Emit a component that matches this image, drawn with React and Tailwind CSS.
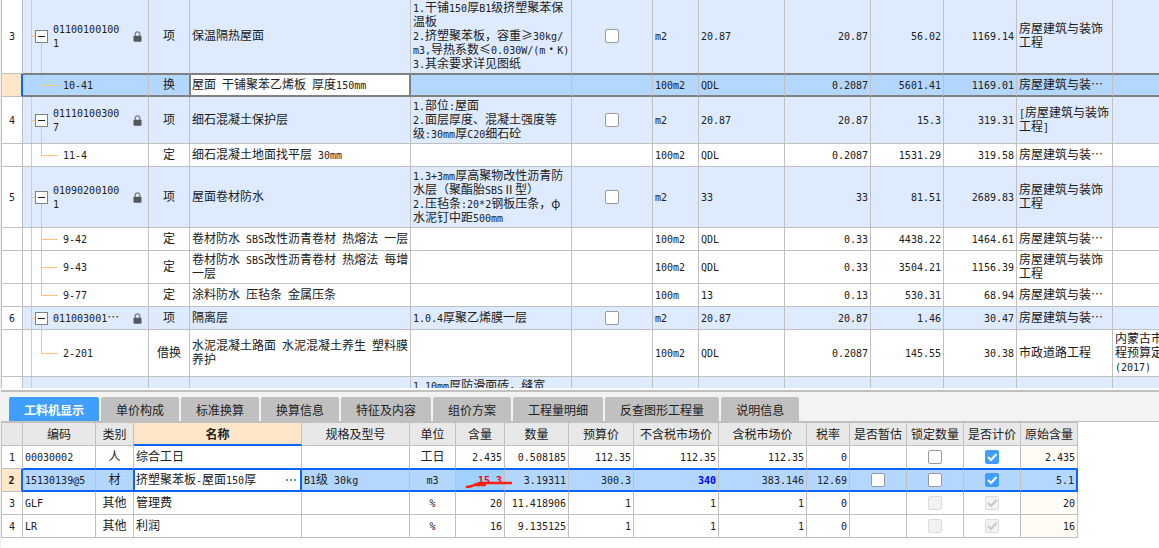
import {useState} from "react";

const quotaRows = [
    {no: "3", code: "01100100100\n1", kind: "项", name: "保温隔热屋面", feature: "1.干铺150厚B1级挤塑聚苯保\n温板\n2.挤塑聚苯板，容重≥30kg/\nm3,导热系数≤0.030W/(m·K)\n3.其余要求详见图纸", unit: "m2", expr: "20.87", qty: "20.87", price: "56.02", total: "1169.14", major: "房屋建筑与装饰\n工程"},
    {code: "10-41", kind: "换", name: "屋面 干铺聚苯乙烯板 厚度150mm", unit: "100m2", expr: "QDL", qty: "0.2087", price: "5601.41", total: "1169.01", major: "房屋建筑与装…", selected: true, last: true},
    {no: "4", code: "01110100300\n7", kind: "项", name: "细石混凝土保护层", feature: "1.部位:屋面\n2.面层厚度、混凝土强度等\n级:30mm厚C20细石砼", unit: "m2", expr: "20.87", qty: "20.87", price: "15.3", total: "319.31", major: "[房屋建筑与装饰\n工程]"},
    {code: "11-4", kind: "定", name: "细石混凝土地面找平层 30mm", unit: "100m2", expr: "QDL", qty: "0.2087", price: "1531.29", total: "319.58", major: "房屋建筑与装…", last: true},
    {no: "5", code: "01090200100\n1", kind: "项", name: "屋面卷材防水", feature: "1.3+3mm厚高聚物改性沥青防\n水层（聚酯胎SBSⅡ型）\n2.压毡条:20*2钢板压条，φ\n水泥钉中距500mm", unit: "m2", expr: "33", qty: "33", price: "81.51", total: "2689.83", major: "房屋建筑与装饰\n工程"},
    {code: "9-42", kind: "定", name: "卷材防水 SBS改性沥青卷材 热熔法 一层", unit: "100m2", expr: "QDL", qty: "0.33", price: "4438.22", total: "1464.61", major: "房屋建筑与装…"},
    {code: "9-43", kind: "定", name: "卷材防水 SBS改性沥青卷材 热熔法 每增\n一层", unit: "100m2", expr: "QDL", qty: "0.33", price: "3504.21", total: "1156.39", major: "房屋建筑与装饰\n工程"},
    {code: "9-77", kind: "定", name: "涂料防水 压毡条 金属压条", unit: "100m", expr: "13", qty: "0.13", price: "530.31", total: "68.94", major: "房屋建筑与装…", last: true},
    {no: "6", code: "011003001…", kind: "项", name: "隔离层", feature: "1.0.4厚聚乙烯膜一层", unit: "m2", expr: "20.87", qty: "20.87", price: "1.46", total: "30.47", major: "房屋建筑与装…"},
    {code: "2-201", kind: "借换", name: "水泥混凝土路面 水泥混凝土养生 塑料膜\n养护", unit: "100m2", expr: "QDL", qty: "0.2087", price: "145.55", total: "30.38", major: "市政道路工程", book: "内蒙古市\n程预算定\n(2017)", last: true},
];

const tabs = ["工料机显示", "单价构成", "标准换算", "换算信息", "特征及内容", "组价方案", "工程量明细", "反查图形工程量", "说明信息"];

const resourceHeads = ["编码", "类别", "名称", "规格及型号", "单位", "含量", "数量", "预算价", "不含税市场价", "含税市场价", "税率", "是否暂估", "锁定数量", "是否计价", "原始含量"];

const resources = [
    {no: "1", code: "00030002", kind: "人", name: "综合工日", unit: "工日", content: "2.435", qty: "0.508185", budget: "112.35", net: "112.35", gross: "112.35", tax: "0", origin: "2.435"},
    {no: "2", code: "15130139@5", kind: "材", name: "挤塑聚苯板-屋面150厚", spec: "B1级 30kg", unit: "m3", content: "15.3", qty: "3.19311", budget: "300.3", net: "340", gross: "383.146", tax: "12.69", origin: "5.1", selected: true},
    {no: "3", code: "GLF", kind: "其他", name: "管理费", unit: "%", content: "20", qty: "11.418906", budget: "1", net: "1", gross: "1", tax: "0", origin: "20", locked: true},
    {no: "4", code: "LR", kind: "其他", name: "利润", unit: "%", content: "16", qty: "9.135125", budget: "1", net: "1", gross: "1", tax: "0", origin: "16", locked: true},
];

// Half-width characters take 6px, full-width ones 12px
const Txt = ({children}) => (children || "").split(/([\x20-\x7e]+)/).map((part, i) => (
    i % 2 ? <span key={i} className="font-['DejaVu_Sans_Mono',monospace] text-[10px] leading-none">{part}</span> : part
));

const Check = ({label, checked = false, disabled = false}) => {
    const [on, setOn] = useState(checked);
    const look = disabled ? "border-[#dcdcdc] bg-[#f2f2f2]" : on ? "border-[#409eff] bg-[#409eff]" : "border-[#999999] bg-white";
    return (<span className="grid place-items-center">
        <input type="checkbox" aria-label={label} checked={on} disabled={disabled}
               onChange={() => setOn(!on)}
               className={"col-start-1 row-start-1 size-3.5 appearance-none rounded-xs border " + look}/>
        {on && <svg viewBox="0 0 14 14" className="pointer-events-none z-10 col-start-1 row-start-1 size-3.5">
            <path d="M3 7l3 3 5.5-6" fill="none" strokeWidth="2" stroke={disabled ? "#c8c8c8" : "#ffffff"}/>
        </svg>}
    </span>);
};

const Lock = () => (<svg viewBox="0 0 9 11" className="mr-1.5 ml-auto h-[11px] w-[9px] shrink-0 self-center">
    <path d="M2.2 5.5V3.2a2.3 2.3 0 0 1 4.6 0v2.3" fill="none" stroke="#7d7f82" strokeWidth="1.3"/>
    <rect x="0.5" y="4.8" width="8" height="6" rx="0.8" fill="#55575a"/>
</svg>);

const TreeCell = ({row}) => (<div className="flex h-full">
    <div className={"ml-2 w-px shrink-0 " + (row.selected ? "" : "bg-[#ffc470]")}/>
    {row.no ? <>
        <div className="h-px w-[3px] shrink-0 self-center bg-[#ffc470]"/>
        <div className="flex w-[13px] shrink-0 flex-col items-center">
            <div className="flex-1"/>
            <button aria-label="折叠"
                    className="flex size-[13px] items-center justify-center border border-[#808080] bg-white">
                <span className="h-px w-[7px] bg-[#202020]"/>
            </button>
            <div className="w-px flex-1 bg-[#ffc470]"/>
        </div>
        <div className="ml-[5px] self-center pb-0.5"><Txt>{row.code}</Txt></div>
        <Lock/>
    </> : <>
        <div className="ml-[9px] flex w-px shrink-0 flex-col">
            <div className="flex-1 bg-[#ffc470]"/>
            <div className="h-px bg-[#ffc470]"/>
            <div className={"flex-1 " + (row.last ? "" : "bg-[#ffc470]")}/>
        </div>
        <div className="h-px w-4 shrink-0 self-center bg-[#ffc470]"/>
        <div className="ml-[5px] self-center pb-0.5"><Txt>{row.code}</Txt></div>
    </>}
</div>);

const QuotaRow = ({row, beforeSelected}) => {
    const sel = row.selected;
    const line = sel ? "border-t border-b-2 border-y-[#808080] " : beforeSelected ? "border-b border-b-[#808080] " : "border-b border-b-[#c0c0c0] ";
    const td = "overflow-hidden whitespace-pre border-r border-r-[#c0c0c0] px-0.5 pt-px pb-[3px] " + line;
    return (<tr className={sel ? "bg-[#b3d7ff]" : row.no ? "bg-[#deebff]" : "bg-white"}>
        <td className={"h-[23px] border-b border-b-[#c0c0c0] pb-0.5 text-center " + (sel ? "border-r-2 border-r-[#0a64ff] bg-[#ffe6c8]" : "border-r border-r-[#c0c0c0] bg-white")}>
            <Txt>{row.no}</Txt>
        </td>
        <td className={"h-[23px] whitespace-pre border-r border-r-[#c0c0c0] p-0 " + line}><TreeCell row={row}/></td>
        <td className={"border-r pt-px pb-[3px] text-center " + line + (sel ? "border-r-[#808080]" : "border-r-[#c0c0c0]")}>{row.kind}</td>
        <td className={"overflow-hidden whitespace-pre pt-px pb-[3px] " + line + (sel ? "border-r-2 border-l border-x-[#808080] bg-white px-px" : "border-r border-r-[#c0c0c0] px-0.5")}>
            <Txt>{row.name}</Txt>
        </td>
        <td className={td}><Txt>{row.feature}</Txt></td>
        <td className={"border-r border-r-[#c0c0c0] " + line}>{row.no && <Check label={"锁定综合单价 " + row.no}/>}</td>
        <td className={td}><Txt>{row.unit}</Txt></td>
        <td className={td}><Txt>{row.expr}</Txt></td>
        <td className={td + "text-right"}><Txt>{row.qty}</Txt></td>
        <td className={td + "text-right"}><Txt>{row.price}</Txt></td>
        <td className={td + "text-right"}><Txt>{row.total}</Txt></td>
        <td className={td}><Txt>{row.major}</Txt></td>
        <td className={"overflow-hidden whitespace-pre px-0.5 pt-px pb-[3px] " + line}><Txt>{row.book}</Txt></td>
    </tr>);
};

const QuotaTable = () => (<div className="h-[388px] overflow-hidden">
    <table className="-mt-px w-full table-fixed border-separate border-spacing-0 border-l border-l-[#c0c0c0]">
        <colgroup>
            <col className="w-[21px]"/>
            <col className="w-[126px]"/>
            <col className="w-[41px]"/>
            <col className="w-[221px]"/>
            <col className="w-[161px]"/>
            <col className="w-[81px]"/>
            <col className="w-[46px]"/>
            <col className="w-[86px]"/>
            <col className="w-[86px]"/>
            <col className="w-[73px]"/>
            <col className="w-[73px]"/>
            <col className="w-[96px]"/>
            <col/>
        </colgroup>
        <tbody>
        {quotaRows.map((row, i) => (<QuotaRow key={row.code} row={row} beforeSelected={quotaRows[i + 1]?.selected}/>))}
        <tr className="bg-[#deebff] align-top">
            <td className="h-[61px] border-r border-r-[#c0c0c0] bg-white"/>
            <td className="h-[61px] border-r border-r-[#c0c0c0] p-0">
                <div className="ml-2 h-full w-px bg-[#ffc470]"/>
            </td>
            <td className="border-r border-r-[#c0c0c0]"/>
            <td className="border-r border-r-[#c0c0c0]"/>
            <td className="border-r border-r-[#c0c0c0] px-0.5 pt-px whitespace-pre"><Txt>1.10mm厚防滑面砖，缝宽</Txt></td>
            {[0, 1, 2, 3, 4, 5, 6].map((n) => (<td key={n} className="border-r border-r-[#c0c0c0]"/>))}
            <td/>
        </tr>
        </tbody>
    </table>
</div>);

const ResourceRow = ({row, beforeSelected}) => {
    const sel = row.selected;
    const line = sel ? "border-t border-b-2 border-y-[#0a64ff] " : beforeSelected ? "border-b border-b-[#0a64ff] " : "border-b border-b-[#c0c0c0] ";
    const base = "h-[23px] overflow-hidden whitespace-pre px-0.5 pb-0.5 " + line;
    const td = base + "border-r border-r-[#c0c0c0] ";
    const box = "h-[23px] border-r border-r-[#c0c0c0] " + line;
    return (<tr className={sel ? "bg-[#b3d7ff]" : "bg-white"}>
        <td className={"h-[23px] border-b border-b-[#c0c0c0] pb-0.5 text-center " + (sel ? "border-r-2 border-r-[#0a64ff] bg-[#ffe6c8] font-bold" : "border-r border-r-[#c0c0c0]")}>
            <Txt>{row.no}</Txt>
        </td>
        <td className={td}><Txt>{row.code}</Txt></td>
        <td className={base + "border-r text-center " + (sel ? "border-r-[#0a64ff]" : "border-r-[#c0c0c0]")}>{row.kind}</td>
        <td className={"h-[23px] pb-0.5 " + line + (sel ? "border-r-2 border-l border-x-[#0a64ff] bg-white px-px" : "border-r border-r-[#c0c0c0] px-0.5")}>
            <div className="flex items-center justify-between">
                <span className="whitespace-pre"><Txt>{row.name}</Txt></span>
                {sel && <button aria-label="选择材料" className="flex gap-0.5 pt-0.5 pr-[3px]">
                    <span className="size-0.5 bg-[#4a9de0]"/>
                    <span className="size-0.5 bg-[#4a9de0]"/>
                    <span className="size-0.5 bg-[#4a9de0]"/>
                </button>}
            </div>
        </td>
        <td className={td}><Txt>{row.spec}</Txt></td>
        <td className={td + "text-center"}><Txt>{row.unit}</Txt></td>
        {sel ? <td className={"relative h-[23px] border-r border-r-[#c0c0c0] bg-[#9fd2ff] px-0.5 pb-0.5 text-right font-bold text-[#ff0000] " + line}>
            <Txt>{row.content}</Txt>
            <svg viewBox="0 0 50 12" className="absolute top-2 left-2 h-3 w-[50px]">
                <path d="M3 9l5-1 2-1h11M10 7l6-2h31" fill="none" stroke="#ff1e10" strokeWidth="2.5" strokeLinecap="round" strokeLinejoin="round"/>
            </svg>
        </td> : <td className={td + "text-right"}><Txt>{row.content}</Txt></td>}
        <td className={td + "text-right"}><Txt>{row.qty}</Txt></td>
        <td className={td + "text-right"}><Txt>{row.budget}</Txt></td>
        <td className={td + "text-right " + (sel ? "font-bold text-[#0000ff]" : "")}><Txt>{row.net}</Txt></td>
        <td className={td + "text-right"}><Txt>{row.gross}</Txt></td>
        <td className={td + "text-right"}><Txt>{row.tax}</Txt></td>
        <td className={box}>{sel && <Check label={"是否暂估 " + row.no}/>}</td>
        <td className={box}><Check label={"锁定数量 " + row.no} disabled={row.locked}/></td>
        <td className={box}><Check label={"是否计价 " + row.no} checked disabled={row.locked}/></td>
        <td className={base + "text-right " + (sel ? "border-r-2 border-r-[#0a64ff]" : "border-r border-r-[#c0c0c0] bg-[#fffcf5]")}>
            <Txt>{row.origin}</Txt>
        </td>
    </tr>);
};

const ResourceTable = () => (<table className="w-[1077px] table-fixed border-separate border-spacing-0 border-t border-l border-[#c0c0c0]">
    <colgroup>
        <col className="w-[21px]"/>
        <col className="w-[73px]"/>
        <col className="w-[38px]"/>
        <col className="w-[168px]"/>
        <col className="w-[108px]"/>
        <col className="w-[46px]"/>
        <col className="w-[49px]"/>
        <col className="w-[64px]"/>
        <col className="w-[65px]"/>
        <col className="w-[85px]"/>
        <col className="w-[88px]"/>
        <col className="w-[43px]"/>
        <col className="w-[57px]"/>
        <col className="w-[57px]"/>
        <col className="w-[57px]"/>
        <col className="w-[57px]"/>
    </colgroup>
    <thead>
    <tr className="bg-[#e8e8e8]">
        <td className="h-[23px] border-r border-b border-[#c0c0c0]"/>
        {resourceHeads.map((head) => (
            <th key={head} scope="col"
                className={"h-[23px] border-r border-r-[#c0c0c0] whitespace-nowrap " + (head === "名称" ? "border-b-2 border-b-[#0a64ff] bg-[#ffe6c8] font-bold" : "border-b border-b-[#c0c0c0] font-normal")}>
                {head}
            </th>
        ))}
    </tr>
    </thead>
    <tbody>
    {resources.map((row, i) => (<ResourceRow key={row.no} row={row} beforeSelected={resources[i + 1]?.selected}/>))}
    </tbody>
</table>);

const App = () => {
    const [active, setActive] = useState(tabs[0]);

    return (<div lang="zh-CN" className="min-h-screen overflow-hidden border-l border-l-[#f0f0f0] bg-white font-['Noto_Sans_CJK_SC',sans-serif] text-[12px] leading-[14px] text-[#202020]">
        <QuotaTable/>
        <div role="tablist" className="mt-0.5 flex gap-0.5 border-t-2 border-b border-[#c0c0c0] bg-[#f3f3f3] pt-[5px] pl-2">
            {tabs.map((tab) => (
                <button key={tab} role="tab" aria-selected={tab === active} onClick={() => setActive(tab)}
                        className={"h-6 rounded-t-xs px-[15px] pt-px whitespace-nowrap " + (tab === active ? "bg-[#409eff] font-bold text-white" : "bg-[#c0c0c0]")}>
                    {tab}
                </button>
            ))}
        </div>
        <ResourceTable/>
    </div>);
};

export default App;
